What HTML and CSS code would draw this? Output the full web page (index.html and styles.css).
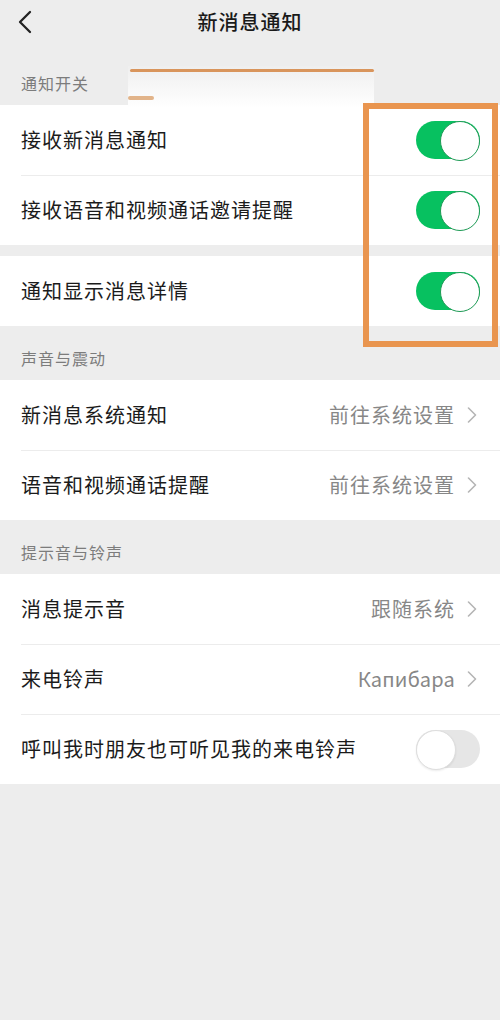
FILE: index.html
```html
<!DOCTYPE html>
<html lang="zh">
<head>
<meta charset="utf-8">
<title>新消息通知</title>
<link rel="stylesheet" href="styles.css">
</head>
<body>
<div class="page">
  <header class="navbar">
    <svg class="back" width="16" height="24" viewBox="0 0 16 24"><path d="M13 2 L3 12 L13 22" fill="none" stroke="#222" stroke-width="2.3" stroke-linecap="round" stroke-linejoin="round"/></svg>
    <h1 class="title">新消息通知</h1>
  </header>

  <div class="section-label">通知开关</div>
  <div class="card">
    <div class="row"><span class="row-text">接收新消息通知</span><span class="switch on"></span></div>
    <div class="row"><span class="row-text">接收语音和视频通话邀请提醒</span><span class="switch on"></span></div>
  </div>
  <div class="gap"></div>
  <div class="card">
    <div class="row"><span class="row-text">通知显示消息详情</span><span class="switch on"></span></div>
  </div>

  <div class="section-label">声音与震动</div>
  <div class="card">
    <div class="row"><span class="row-text">新消息系统通知</span><span class="row-right"><span class="value">前往系统设置</span><svg class="chev" width="10" height="16" viewBox="0 0 10 16"><path d="M1.5 1 L8.5 8 L1.5 15" fill="none" stroke="#b5b5b5" stroke-width="1.6" stroke-linecap="round" stroke-linejoin="round"/></svg></span></div>
    <div class="row"><span class="row-text">语音和视频通话提醒</span><span class="row-right"><span class="value">前往系统设置</span><svg class="chev" width="10" height="16" viewBox="0 0 10 16"><path d="M1.5 1 L8.5 8 L1.5 15" fill="none" stroke="#b5b5b5" stroke-width="1.6" stroke-linecap="round" stroke-linejoin="round"/></svg></span></div>
  </div>

  <div class="section-label">提示音与铃声</div>
  <div class="card">
    <div class="row"><span class="row-text">消息提示音</span><span class="row-right"><span class="value">跟随系统</span><svg class="chev" width="10" height="16" viewBox="0 0 10 16"><path d="M1.5 1 L8.5 8 L1.5 15" fill="none" stroke="#b5b5b5" stroke-width="1.6" stroke-linecap="round" stroke-linejoin="round"/></svg></span></div>
    <div class="row"><span class="row-text">来电铃声</span><span class="row-right"><span class="value latin">Капибара</span><svg class="chev" width="10" height="16" viewBox="0 0 10 16"><path d="M1.5 1 L8.5 8 L1.5 15" fill="none" stroke="#b5b5b5" stroke-width="1.6" stroke-linecap="round" stroke-linejoin="round"/></svg></span></div>
    <div class="row"><span class="row-text">呼叫我时朋友也可听见我的来电铃声</span><span class="switch off"></span></div>
  </div>

  <div class="smudge"><div class="smudge-line"></div><div class="smudge-mark"></div></div>
  <div class="highlight"></div>
</div>
</body>
</html>
```

FILE: styles.css
```css
* { box-sizing: border-box; }
html, body { margin: 0; padding: 0; }
body {
  background: #ededed;
  font-family: "Noto Sans CJK SC", "Noto Sans", sans-serif;
  width: 500px;
  min-height: 1020px;
}
.page { position: relative; width: 500px; }

.navbar {
  height: 51px;
  display: flex;
  align-items: flex-start;
  justify-content: center;
  padding-top: 9px;
}
.back { position: absolute; left: 17px; top: 10px; }
.title {
  margin: 0;
  font-size: 20px;
  line-height: 26px;
  font-weight: 500;
  color: #1a1a1a;
  letter-spacing: 1px;
}

.section-label {
  height: 54px;
  padding: 20px 0 0 21px;
  font-size: 16px;
  line-height: 24px;
  color: #7c7c7c;
  letter-spacing: 1px;
}

.card { background: #fff; }
.gap { height: 11px; }

.row {
  height: 70px;
  display: flex;
  align-items: center;
  justify-content: space-between;
  padding: 0 20px 0 21px;
  position: relative;
}
.row + .row::before {
  content: "";
  position: absolute;
  left: 21px; right: 0; top: 0;
  height: 1px;
  background: #ececec;
}
.row-text {
  font-size: 20px;
  line-height: 28px;
  color: #1b1b1b;
  letter-spacing: 1px;
}
.row-right { display: flex; align-items: center; gap: 12px; padding-right: 3px; }
.value {
  font-size: 20px;
  line-height: 28px;
  color: #878787;
  letter-spacing: 1px;
}
.value.latin { letter-spacing: 0.2px; }
.chev { display: block; }

.switch {
  width: 64px;
  height: 38px;
  border-radius: 19px;
  position: relative;
  flex: none;
}
.switch::after {
  content: "";
  position: absolute;
  top: 0;
  width: 38px;
  height: 38px;
  border-radius: 50%;
  background: #fff;
}
.switch.on { background: #07c160; }
.switch.on::after { right: 0; border: 1.5px solid #1e9a55; }
.switch.off { background: #e6e6e6; }
.switch.off::after { left: 0; border: 1.5px solid #dedede; box-shadow: 0 1px 2px rgba(0,0,0,0.08); }

.smudge {
  position: absolute;
  left: 128px;
  top: 66px;
  width: 246px;
  height: 42px;
  background: linear-gradient(to bottom, rgba(240,240,240,0.6) 0%, rgba(248,248,248,0.9) 50%, #fff 100%);
}
.smudge-line {
  position: absolute;
  left: 2px; right: 0; top: 3px;
  height: 3px;
  background: #d9955c;
  border-radius: 2px;
}
.smudge-mark {
  position: absolute;
  left: 0; top: 30px;
  width: 26px; height: 4px;
  background: #e2b48a;
  border-radius: 2px;
}

.highlight {
  position: absolute;
  left: 363px;
  top: 103px;
  width: 135px;
  height: 244px;
  border: 6px solid #e9954f;
}
```
